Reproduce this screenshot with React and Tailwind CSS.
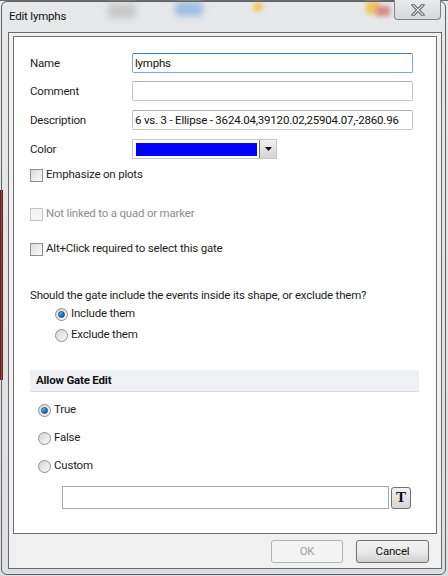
import React from 'react'

const font = { fontFamily: 'Roboto, "Noto Sans", Arial, sans-serif' }

function Checkbox({ disabled }) {
  return (
    <span
      className={`inline-block w-[13px] h-[13px] border ${
        disabled ? 'border-[#c4c4c4] bg-[#f4f4f4]' : 'border-[#8e8f8f] bg-gradient-to-br from-[#dcdcdc] to-[#fbfbfb]'
      }`}
    />
  )
}

function Radio({ checked }) {
  return (
    <span className="relative inline-flex w-[13px] h-[13px] rounded-full border border-[#8e8f8f] bg-gradient-to-br from-[#d4d4d4] to-[#fafafa] items-center justify-center">
      {checked && (
        <span className="w-[7px] h-[7px] rounded-full bg-gradient-to-br from-[#7fc9f4] via-[#1f8ad2] to-[#0d4f86] border border-[#1e4f7a]" />
      )}
    </span>
  )
}

function Field({ label, value, focused }) {
  return (
    <div className="flex items-center h-[20px]">
      <span className="w-[102px] text-[11.5px] text-[#1e1e1e] pt-[1px]">{label}</span>
      <div
        className={`w-[281px] h-[20px] border rounded-[2px] bg-white flex items-center px-[2px] overflow-hidden ${
          focused ? 'border-[#7ea9d2] border-t-[#3d7bad]' : 'border-[#c5c7cc] border-t-[#abadb3]'
        }`}
      >
        <span className="text-[11.5px] text-[#111] whitespace-nowrap pt-[1px]">{value}</span>
      </div>
    </div>
  )
}

export default function App() {
  return (
    <div className="relative w-[448px] h-[576px] overflow-hidden bg-white tracking-[-0.2px]" style={font}>
      {/* glass frame behind */}
      <div className="absolute inset-0 bg-gradient-to-b from-[#e6e8ea] to-[#dcdee1]" />
      <div className="absolute left-0 top-0 w-full h-[1px] bg-[#6b6b6b]" />
      <div className="absolute left-[175px] top-[2px] w-[28px] h-[14px] rounded bg-[#9fbde3] blur-[3px]" />
      <div className="absolute left-[253px] top-[3px] w-[10px] h-[8px] rounded-full bg-[#f2c65a] blur-[2px]" />
      <div className="absolute left-[366px] top-[2px] w-[14px] h-[12px] bg-[#f1c45c] blur-[2px]" />
      <div className="absolute left-[376px] top-[6px] w-[14px] h-[10px] bg-[#d98a8a] blur-[2px]" />
      <div className="absolute left-[108px] top-[4px] w-[28px] h-[14px] bg-[#c8c8c8] blur-[3px]" />
      <div className="absolute left-0 top-[190px] w-[3px] h-[190px] bg-[#7d1414]" />
      <div className="absolute left-[1px] top-[1px] right-[2px] bottom-[1px] border border-[#5f6266] rounded-[6px]" />

      {/* title */}
      <div className="absolute left-[9px] top-[8px] text-[11.5px] text-[#111]">Edit lymphs</div>
      <div className="absolute left-[394px] top-[0px] w-[47px] h-[20px] border border-[#7f8287] border-t-0 rounded-b-[4px] bg-gradient-to-b from-[#e9eaec] to-[#d6d8db] flex items-center justify-center">
        <svg width="14" height="12" viewBox="0 0 14 12">
          <path d="M2 1 L12 11 M12 1 L2 11" stroke="#3a3d42" strokeWidth="3" strokeLinecap="round" />
          <path d="M2 1 L12 11 M12 1 L2 11" stroke="#f6f6f6" strokeWidth="1.2" strokeLinecap="round" />
        </svg>
      </div>

      {/* client area */}
      <div className="absolute left-[8px] top-[32px] w-[434px] h-[537px] border border-[#6a6a6a] bg-[#f0f0f0] flex flex-col">
        <div className="mx-[4px] mt-[3px] h-[498px] border border-[#6f6f6f] bg-white flex flex-col pl-[16px] pr-[16px]">
          <div className="h-[16px]" />
          <Field label="Name" value="lymphs" focused />
          <div className="mt-[8px]"><Field label="Comment" value="" /></div>
          <div className="mt-[9px]">
            <Field label="Description" value="6 vs. 3 - Ellipse - 3624.04,39120.02,25904.07,-2860.96" />
          </div>
          <div className="mt-[9px] flex items-center h-[20px]">
            <span className="w-[102px] text-[11.5px] text-[#1e1e1e] pt-[1px]">Color</span>
            <div className="w-[145px] h-[20px] border border-[#c5c7cc] flex items-center bg-white">
              <div className="ml-[3px] w-[121px] h-[13px] bg-[#0000ff]" />
              <div className="ml-[2px] h-[18px] w-[17px] border-l border-[#707070] bg-gradient-to-b from-[#f2f2f2] to-[#d4d4d4] flex items-center justify-center">
                <svg width="7" height="4" viewBox="0 0 7 4"><path d="M0 0 H7 L3.5 4 Z" fill="#111" /></svg>
              </div>
            </div>
          </div>

          <div className="mt-[8px] h-[16px] flex items-center gap-[3px]">
            <Checkbox />
            <span className="text-[11.5px] text-[#1e1e1e]">Emphasize on plots</span>
          </div>
          <div className="mt-[23px] h-[16px] flex items-center gap-[3px]">
            <Checkbox disabled />
            <span className="text-[11.5px] text-[#8d8d8d]">Not linked to a quad or marker</span>
          </div>
          <div className="mt-[19px] h-[16px] flex items-center gap-[3px]">
            <Checkbox />
            <span className="text-[11.5px] text-[#1e1e1e]">Alt+Click required to select this gate</span>
          </div>

          <div className="mt-[31px] h-[16px] flex items-center text-[11.5px] text-[#1e1e1e] whitespace-nowrap">
            Should the gate include the events inside its shape, or exclude them?
          </div>
          <div className="mt-[2px] h-[16px] flex items-center gap-[3px] pl-[25px]">
            <Radio checked />
            <span className="text-[11.5px] text-[#1e1e1e]">Include them</span>
          </div>
          <div className="mt-[5px] h-[16px] flex items-center gap-[3px] pl-[25px]">
            <Radio />
            <span className="text-[11.5px] text-[#1e1e1e]">Exclude them</span>
          </div>

          <div className="mt-[27px] h-[22px] bg-[#eff0f4] border-b border-[#dcdde3] flex items-center pl-[6px] mr-[1px]">
            <span className="text-[11.5px] font-bold text-[#111]">Allow Gate Edit</span>
          </div>
          <div className="mt-[10px] h-[16px] flex items-center gap-[3px] pl-[8px]">
            <Radio checked />
            <span className="text-[11.5px] text-[#1e1e1e]">True</span>
          </div>
          <div className="mt-[12px] h-[16px] flex items-center gap-[3px] pl-[8px]">
            <Radio />
            <span className="text-[11.5px] text-[#1e1e1e]">False</span>
          </div>
          <div className="mt-[12px] h-[16px] flex items-center gap-[3px] pl-[8px]">
            <Radio />
            <span className="text-[11.5px] text-[#1e1e1e]">Custom</span>
          </div>
          <div className="mt-[12px] flex items-center pl-[32px]">
            <div className="w-[327px] h-[23px] border border-[#a8a8a8] bg-white" />
            <div className="ml-[2px] w-[20px] h-[22px] border border-[#707070] rounded-[3px] bg-gradient-to-b from-[#f2f2f2] to-[#d6d6d6] flex items-center justify-center">
              <span className="text-[15px] font-bold text-[#111] leading-none" style={{ fontFamily: '"Liberation Serif", serif' }}>T</span>
            </div>
          </div>
        </div>

        <div className="flex justify-end gap-[13px] pr-[12px] mt-[6px]">
          <div className="w-[72px] h-[23px] border border-[#adb2b5] rounded-[3px] bg-[#f4f4f4] flex items-center justify-center text-[11.5px] text-[#a0a0a0]">
            OK
          </div>
          <div className="w-[73px] h-[23px] border border-[#707070] rounded-[3px] bg-gradient-to-b from-[#f2f2f2] via-[#ebebeb] to-[#d0d0d0] flex items-center justify-center text-[11.5px] text-[#111]">
            Cancel
          </div>
        </div>
      </div>
    </div>
  )
}
